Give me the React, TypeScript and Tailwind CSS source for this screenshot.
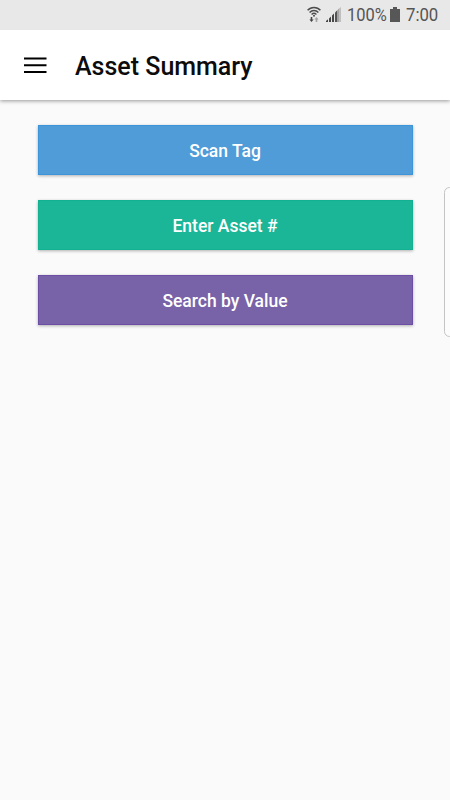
const actions = [
  { label: "Scan Tag", color: "bg-[#509cd8] border-[#3c95d9]" },
  { label: "Enter Asset #", color: "bg-[#1bb698] border-[#12b192]" },
  { label: "Search by Value", color: "bg-[#7862a8] border-[#6c4fa4]" },
]

function WifiIcon() {
  return (
    <svg width="14" height="17" viewBox="0 0 14 17" fill="none" className="ml-[307px] mt-[6px]">
      <path d="M.6 4.300C4 .4 10 .4 13.400 4.300" stroke="#4d4d4d" strokeWidth="1.500" />
      <path d="M2.600 6.500C5.200 3.700 8.800 3.700 11.400 6.500" stroke="#4d4d4d" strokeWidth="1.500" />
      <path d="M4.600 8.400C6 7 8 7 9.400 8.400" stroke="#4d4d4d" strokeWidth="1.400" />
      <circle cx="7" cy="9.800" r="1" fill="#4d4d4d" />
      <path d="M3.700 11h1.600v2.400h1.300l-2.100 2.600-2.100-2.600h1.300z" fill="#454545" />
      <path d="M8.700 16h1.600v-2.400h1.300L9.500 11l-2.100 2.600h1.300z" fill="#a3a3a3" />
    </svg>
  )
}

function SignalIcon() {
  return (
    <svg width="16" height="16" viewBox="0 0 16 16" className="ml-[5px] mt-[7px]">
      <path d="M0 15v-1l2-1.700V15zM3 15v-3.600l2-2V15zM6 15V8.500l2-2V15z" fill="#454545" />
      <path d="M9 15V5.500l2-2V15z" fill="#555" />
      <path d="M11 15V3.500L13 1.600V15z" fill="#a3a3a3" />
      <path d="M13 15V1.600L15 0v15z" fill="#c0c0c0" />
    </svg>
  )
}

function BatteryIcon() {
  return (
    <svg width="10" height="15" viewBox="0 0 10 15" className="ml-[4px] mt-[7px]">
      <path d="M3 0h4v2h3v13H0V2h3z" fill="#575757" />
    </svg>
  )
}

export default function App() {
  return (
    <div className="relative flex h-[800px] w-[450px] flex-col overflow-hidden bg-[#fafafa] font-['Roboto',sans-serif]">
      {/* Status bar */}
      <div className="relative z-20 flex h-[30px] shrink-0 items-start bg-[#e8e8e8] text-[19px] leading-[30px] text-[#555]">
        <WifiIcon />
        <SignalIcon />
        <span className="ml-[5px] w-[39px] origin-left scale-x-[0.865] whitespace-nowrap">100%</span>
        <BatteryIcon />
        <span className="ml-[6px] origin-left scale-x-[0.88] whitespace-nowrap">7:00</span>
      </div>

      {/* App bar */}
      <header className="z-10 flex h-[70px] shrink-0 items-center bg-white pl-6 shadow-[0_1px_4px_rgba(0,0,0,0.4)]">
        <svg width="23" height="16" viewBox="0 0 23 16" className="shrink-0">
          <path d="M0 .4h22.500v2H0zM0 7.200h22.500v2H0zM0 14h22.500v2H0z" fill="#000" />
        </svg>
        <h1 className="ml-[28px] pt-[3px] text-[25px] font-medium leading-[30px] text-[#0c0c0c]">Asset Summary</h1>
      </header>

      {/* Actions */}
      <main className="flex flex-col gap-[25px] px-[37.5px] pt-[25px]">
        {actions.map((action) => (
          <button
            key={action.label}
            className={`h-[50px] border pt-[2px] text-[17.5px] font-medium text-white shadow-[0_1px_3px_rgba(0,0,0,0.3)] ${action.color}`}
          >
            {action.label}
          </button>
        ))}
      </main>

      {/* Edge panel handle */}
      <div className="absolute -right-[5px] top-[187px] h-[150px] w-[11px] rounded-[6px] border border-[#c4c4c4] bg-[#fcfcfc]" />
    </div>
  )
}
